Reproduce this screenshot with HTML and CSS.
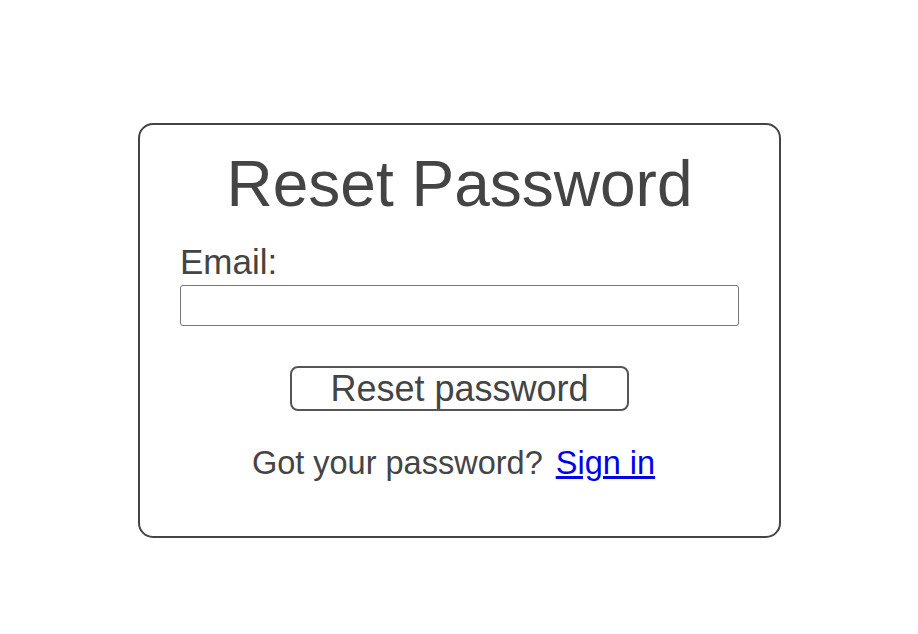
FILE: index.html
```html
<!DOCTYPE html>
<html>
<head>
<meta charset="utf-8">
<link rel="stylesheet" href="styles.css">
</head>
<body>
<div class="page">
  <form class="card">
    <h1 class="title">Reset Password</h1>
    <label class="label" for="email">Email:</label>
    <input class="input" id="email" type="text">
    <div class="actions">
      <button class="btn" type="button">Reset password</button>
    </div>
    <p class="footer">Got your password? <a class="link" href="#">Sign in</a></p>
  </form>
</div>
</body>
</html>
```
FILE: styles.css
```css
html, body {
  margin: 0;
  padding: 0;
  background: #fff;
}
body {
  font-family: "Liberation Sans", Arial, Helvetica, sans-serif;
  color: #444;
}
.page {
  display: flex;
  justify-content: center;
  padding-top: 123px;
  padding-left: 1px;
}
.card {
  box-sizing: border-box;
  width: 643px;
  height: 415px;
  border: 2px solid #444;
  border-radius: 15px;
  padding: 27px 40px 0 40px;
  display: flex;
  flex-direction: column;
}
.title {
  margin: 0;
  font-size: 64px;
  line-height: 64px;
  font-weight: normal;
  text-align: center;
  color: #444;
}
.label {
  margin-top: 28px;
  font-size: 35px;
  line-height: 35px;
}
.input {
  box-sizing: border-box;
  margin: 6px 0 0 0;
  width: 559px;
  height: 41px;
  border: 1.5px solid #777;
  border-radius: 3px;
  padding: 0;
  background: #fff;
}
.actions {
  display: flex;
  justify-content: center;
  margin-top: 40px;
}
.btn {
  box-sizing: border-box;
  width: 339px;
  height: 45px;
  border: 2px solid #555;
  border-radius: 8px;
  background: #fff;
  color: #444;
  font-family: "Liberation Sans", Arial, Helvetica, sans-serif;
  font-size: 36px;
  line-height: 40px;
  padding: 0;
}
.footer {
  margin: 32px 0 0 0;
  padding-right: 12px;
  text-align: center;
  font-size: 32.5px;
  line-height: 40px;
}
.link {
  color: #0000ee;
  text-decoration: underline;
  margin-left: 4px;
}
```
